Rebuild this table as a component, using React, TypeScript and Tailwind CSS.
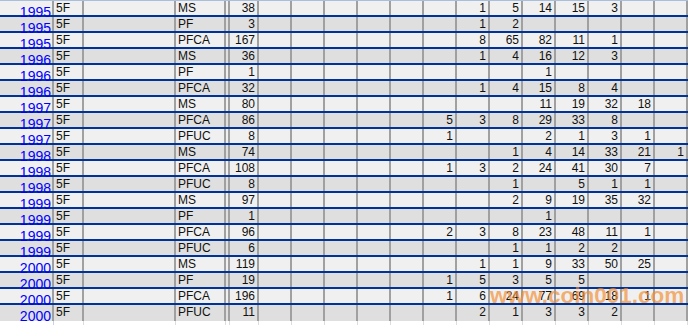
type Row = { year: string; type: string; total: number; vals: Record<number, number> };

const rows: Row[] = [
  { year: '1995', type: 'MS', total: 38, vals: { 6: 1, 7: 5, 8: 14, 9: 15, 10: 3 } },
  { year: '1995', type: 'PF', total: 3, vals: { 6: 1, 7: 2 } },
  { year: '1995', type: 'PFCA', total: 167, vals: { 6: 8, 7: 65, 8: 82, 9: 11, 10: 1 } },
  { year: '1996', type: 'MS', total: 36, vals: { 6: 1, 7: 4, 8: 16, 9: 12, 10: 3 } },
  { year: '1996', type: 'PF', total: 1, vals: { 8: 1 } },
  { year: '1996', type: 'PFCA', total: 32, vals: { 6: 1, 7: 4, 8: 15, 9: 8, 10: 4 } },
  { year: '1997', type: 'MS', total: 80, vals: { 8: 11, 9: 19, 10: 32, 11: 18 } },
  { year: '1997', type: 'PFCA', total: 86, vals: { 5: 5, 6: 3, 7: 8, 8: 29, 9: 33, 10: 8 } },
  { year: '1997', type: 'PFUC', total: 8, vals: { 5: 1, 8: 2, 9: 1, 10: 3, 11: 1 } },
  { year: '1998', type: 'MS', total: 74, vals: { 7: 1, 8: 4, 9: 14, 10: 33, 11: 21, 12: 1 } },
  { year: '1998', type: 'PFCA', total: 108, vals: { 5: 1, 6: 3, 7: 2, 8: 24, 9: 41, 10: 30, 11: 7 } },
  { year: '1998', type: 'PFUC', total: 8, vals: { 7: 1, 9: 5, 10: 1, 11: 1 } },
  { year: '1999', type: 'MS', total: 97, vals: { 7: 2, 8: 9, 9: 19, 10: 35, 11: 32 } },
  { year: '1999', type: 'PF', total: 1, vals: { 8: 1 } },
  { year: '1999', type: 'PFCA', total: 96, vals: { 5: 2, 6: 3, 7: 8, 8: 23, 9: 48, 10: 11, 11: 1 } },
  { year: '1999', type: 'PFUC', total: 6, vals: { 7: 1, 8: 1, 9: 2, 10: 2 } },
  { year: '2000', type: 'MS', total: 119, vals: { 6: 1, 7: 1, 8: 9, 9: 33, 10: 50, 11: 25 } },
  { year: '2000', type: 'PF', total: 19, vals: { 5: 1, 6: 5, 7: 3, 8: 5, 9: 5 } },
  { year: '2000', type: 'PFCA', total: 196, vals: { 5: 1, 6: 6, 7: 24, 8: 77, 9: 69, 10: 18, 11: 1 } },
  { year: '2000', type: 'PFUC', total: 11, vals: { 6: 2, 7: 1, 8: 3, 9: 3, 10: 2 } },
];

const cols = Array.from({ length: 13 }, (_, i) => i);
const cell = 'h-full border-r-2 border-[#a0a0a0] shrink-0';

export default function App() {
  return (
    <div className="relative w-[691px] h-[325px] overflow-hidden bg-white font-['Liberation_Sans',Arial,sans-serif] text-[12px] leading-[14px] text-[#111]">
      <div className="w-[688px] border-t border-[#a9bedc]">
        {rows.map((r, i) => {
          const last = i === rows.length - 1;
          return (
            <div
              key={i}
              className={`flex h-[16px] ${last ? '' : 'border-b-2 border-[#003399]'} ${i % 2 === 0 ? 'bg-[#f0f0f0]' : 'bg-[#dfdfdf]'}`}
            >
              <div className={`${cell} w-[54px] pr-[1px] pt-[4px] text-right text-[14px] leading-[14px] text-[#0000ff] whitespace-nowrap`}>
                {r.year}
              </div>
              <div className={`${cell} w-[30px] pl-[2px]`}>5F</div>
              <div className={`${cell} w-[92px]`} />
              <div className={`${cell} w-[50px] pl-[2px]`}>{r.type}</div>
              <div className={`${cell} w-[4px]`} />
              <div className={`${cell} w-[29px] pr-[2px] text-right`}>{r.total}</div>
              {cols.map((c) => (
                <div key={c} className={`${cell} w-[33px] pr-[2px] text-right`}>
                  {r.vals[c] ?? ''}
                </div>
              ))}
            </div>
          );
        })}
        <div className="flex h-[4px] bg-white">
          <div className="h-full w-[54px] border-r border-[#c8d2e4]" />
          <div className="h-full w-[30px] border-r border-[#dcdcdc]" />
          <div className="h-full w-[92px] border-r border-[#dcdcdc]" />
          <div className="h-full w-[50px] border-r border-[#dcdcdc]" />
          <div className="h-full w-[4px] border-r border-[#dcdcdc]" />
          <div className="h-full w-[29px] border-r border-[#dcdcdc]" />
          {cols.map((c) => (
            <div key={c} className="h-full w-[33px] border-r border-[#dcdcdc]" />
          ))}
        </div>
      </div>

      <div className="absolute left-[490px] top-[285px] text-[22.5px] leading-none font-bold text-[rgba(243,140,50,0.68)] whitespace-nowrap">
        www.coin001.com
      </div>
    </div>
  );
}
